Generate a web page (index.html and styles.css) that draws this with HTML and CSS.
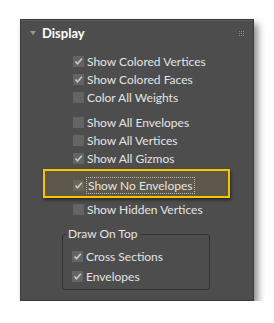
FILE: index.html
```html
<!DOCTYPE html>
<html lang="en">
<head>
  <meta charset="UTF-8">
  <title>Display</title>
  <link rel="stylesheet" href="styles.css">
</head>
<body>
  <!-- Панель Display -->
  <div class="panel">
    <div class="panel-head">
      <span class="arrow"></span>
      <span class="title">Display</span>
      <span class="grip">
        <i></i><i></i><i></i><i></i><i></i><i></i><i></i><i></i><i></i>
      </span>
    </div>

    <div class="opts">
      <div class="group">
        <label class="row"><span class="box on"><svg viewBox="0 0 11 11"><path d="M2.5 5.5 L4.5 7.8 L8.8 2.8" /></svg></span>Show Colored Vertices</label>
        <label class="row"><span class="box on"><svg viewBox="0 0 11 11"><path d="M2.5 5.5 L4.5 7.8 L8.8 2.8" /></svg></span>Show Colored Faces</label>
        <label class="row"><span class="box"></span>Color All Weights</label>
      </div>

      <div class="group">
        <label class="row"><span class="box"></span>Show All Envelopes</label>
        <label class="row"><span class="box"></span>Show All Vertices</label>
        <label class="row"><span class="box on"><svg viewBox="0 0 11 11"><path d="M2.5 5.5 L4.5 7.8 L8.8 2.8" /></svg></span>Show All Gizmos</label>
      </div>

      <!-- выделенный пункт -->
      <div class="hilite">
        <label class="row"><span class="box on"><svg viewBox="0 0 11 11"><path d="M2.5 5.5 L4.5 7.8 L8.8 2.8" /></svg></span><span class="focus">Show No Envelopes</span></label>
      </div>

      <label class="row"><span class="box"></span>Show Hidden Vertices</label>

      <fieldset class="ontop">
        <legend>Draw On Top</legend>
        <label class="row"><span class="box on"><svg viewBox="0 0 11 11"><path d="M2.5 5.5 L4.5 7.8 L8.8 2.8" /></svg></span>Cross Sections</label>
        <label class="row"><span class="box on"><svg viewBox="0 0 11 11"><path d="M2.5 5.5 L4.5 7.8 L8.8 2.8" /></svg></span>Envelopes</label>
      </fieldset>
    </div>
  </div>
</body>
</html>
```

FILE: styles.css
```css
/* Общие стили */
body {
  margin: 0;
  background: #fff;
  font-family: Lato, "Noto Sans", sans-serif;
  font-size: 12px;
  color: #e4e4e4;
}

/* Панель */
.panel {
  width: 232px;
  height: 280px;
  margin: 19px 0 0 20px;
  background: #4d4d4d;
  border: 1px solid #3a3a3a;
  box-shadow: inset 0 1px 0 #5c5c5c, 4px 5px 7px rgba(0, 0, 0, 0.45);
}

.panel-head {
  display: flex;
  align-items: center;
  height: 26px;
  padding-left: 9px;
}

.arrow {
  width: 0;
  height: 0;
  border-left: 3px solid transparent;
  border-right: 3px solid transparent;
  border-top: 4px solid #9a9a9a;
  margin-right: 6px;
}

.title {
  font-weight: bold;
  font-size: 13px;
  color: #fff;
  flex: 1;
}

.grip {
  display: grid;
  grid-template-columns: repeat(3, 1px);
  gap: 1px;
  margin-right: 9px;
}

.grip i {
  width: 1px;
  height: 1px;
  background: #8a8a8a;
}

/* Список флажков */
.opts {
  padding: 6px 0 0 52px;
}

.group {
  margin-bottom: 7px;
}

.row {
  display: flex;
  align-items: center;
  height: 18px;
}

.box {
  width: 11px;
  height: 11px;
  background: #646464;
  margin-right: 3px;
  flex: none;
}

.box svg {
  display: block;
  width: 11px;
  height: 11px;
}

.box path {
  fill: none;
  stroke: #c8c8c8;
  stroke-width: 1.6;
}

/* Выделение */
.hilite {
  width: 187px;
  height: 29px;
  margin: -5px 0 2px -30px;
  padding: 5px 0 0 28px;
  box-sizing: border-box;
  background: #5d5849;
  border: 2px solid #f5c500;
  box-shadow: 1px 2px 3px rgba(0, 0, 0, 0.5);
}

.hilite .box {
  background: #6b6757;
}

.focus {
  outline: 1px dotted #b8b8b8;
  padding: 0 1px;
  line-height: 15px;
}

/* Draw On Top */
.ontop {
  width: 137px;
  margin: 9px 0 0 -11px;
  padding: 5px 0 3px 9px;
  border: 1px solid #333;
  border-radius: 3px;
  min-inline-size: 0;
}

.ontop legend {
  padding: 0 2px;
  margin-left: -6px;
  line-height: 14px;
  color: #e4e4e4;
}

.ontop .row {
  height: 20px;
}
```
